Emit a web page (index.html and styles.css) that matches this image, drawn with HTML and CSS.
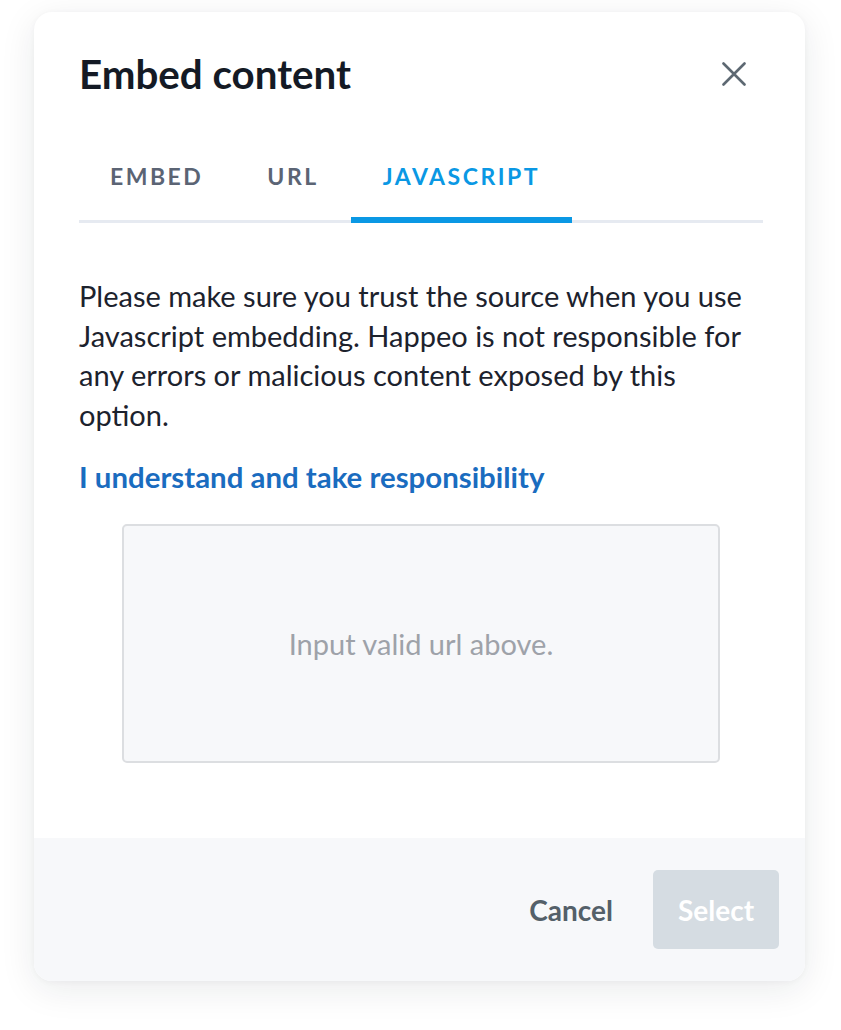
FILE: index.html
```html
<!DOCTYPE html>
<html lang="en">
<head>
<meta charset="utf-8">
<title>Embed content</title>
<link rel="stylesheet" href="styles.css">
</head>
<body>
<div class="dialog">
  <div class="dialog-body">
    <div class="header">
      <h1 class="title">Embed content</h1>
      <button class="close" aria-label="Close">
        <svg width="24" height="24" viewBox="0 0 24 24"><path d="M1.5 1.5 L22.5 22.5 M22.5 1.5 L1.5 22.5" stroke="#5d6872" stroke-width="2.6" stroke-linecap="round" fill="none"/></svg>
      </button>
    </div>
    <div class="tabs">
      <div class="tab">EMBED</div>
      <div class="tab">URL</div>
      <div class="tab active">JAVASCRIPT</div>
    </div>
    <p class="warning">Please make sure you trust the source when you use Javascript embedding. Happeo is not responsible for any errors or malicious content exposed by this option.</p>
    <a class="accept" href="#">I understand and take responsibility</a>
    <div class="preview">Input valid url above.</div>
  </div>
  <div class="footer">
    <button class="btn btn-cancel">Cancel</button>
    <button class="btn btn-select" disabled>Select</button>
  </div>
</div>
</body>
</html>
```

FILE: styles.css
```css
* { box-sizing: border-box; }
html, body { margin: 0; padding: 0; background: #ffffff; }
body {
  font-family: Lato, "Open Sans", "Liberation Sans", sans-serif;
  width: 841px;
  height: 1030px;
  overflow: hidden;
}
.dialog {
  margin: 12px 0 0 34px;
  width: 771px;
  height: 969px;
  background: #ffffff;
  border-radius: 18px;
  box-shadow: 0 8px 36px rgba(20, 30, 45, 0.09), 0 1px 6px rgba(20, 30, 45, 0.04);
  display: flex;
  flex-direction: column;
  overflow: hidden;
}
.dialog-body {
  flex: 1;
  padding: 38px 42px 0 45px;
  display: flex;
  flex-direction: column;
}
.header {
  display: flex;
  align-items: center;
  justify-content: space-between;
}
.title {
  margin: 0;
  font-size: 40.3px;
  line-height: 48px;
  font-weight: 700;
  color: #141a25;
}
.close {
  border: 0;
  background: none;
  padding: 0;
  margin: -1px 17px 0 0;
  width: 24px;
  height: 24px;
  display: flex;
}
.tabs {
  margin-top: 34px;
  display: flex;
  border-bottom: 3px solid #e6eaf1;
}
.tab {
  position: relative;
  padding: 30px 32px;
  font-size: 23px;
  line-height: 28px;
  font-weight: 700;
  letter-spacing: 2.5px;
  color: #5b6474;
}
.tab:first-child { margin-left: -1px; }
.tab.active { color: #0a98e4; }
.tab.active::after {
  content: "";
  position: absolute;
  left: 0;
  right: 0;
  bottom: -3px;
  height: 6px;
  background: #0a98e4;
}
.warning {
  margin: 53px 0 0;
  font-size: 29px;
  line-height: 39.5px;
  color: #1c222d;
}
.accept {
  margin-top: 23px;
  font-size: 29.4px;
  line-height: 39.5px;
  font-weight: 700;
  color: #1a6cbf;
  text-decoration: none;
  align-self: flex-start;
}
.preview {
  margin: 27px auto 0;
  width: 598px;
  height: 239px;
  background: #f7f8fa;
  border: 2px solid #dcdee1;
  border-radius: 5px;
  display: flex;
  align-items: center;
  justify-content: center;
  font-size: 29px;
  color: #9ea2a9;
}
.footer {
  background: #f7f8fa;
  height: 143px;
  padding: 32px 26px 32px 0;
  display: flex;
  justify-content: flex-end;
  gap: 16px;
}
.btn {
  font-family: inherit;
  font-size: 28px;
  font-weight: 700;
  border: 0;
  border-radius: 5px;
  padding: 0 24px;
  height: 79px;
  background: none;
}
.btn-cancel { color: #546069; }
.btn-select {
  width: 126px;
  padding: 0;
  background: #d5dce2;
  color: #ffffff;
}
```
